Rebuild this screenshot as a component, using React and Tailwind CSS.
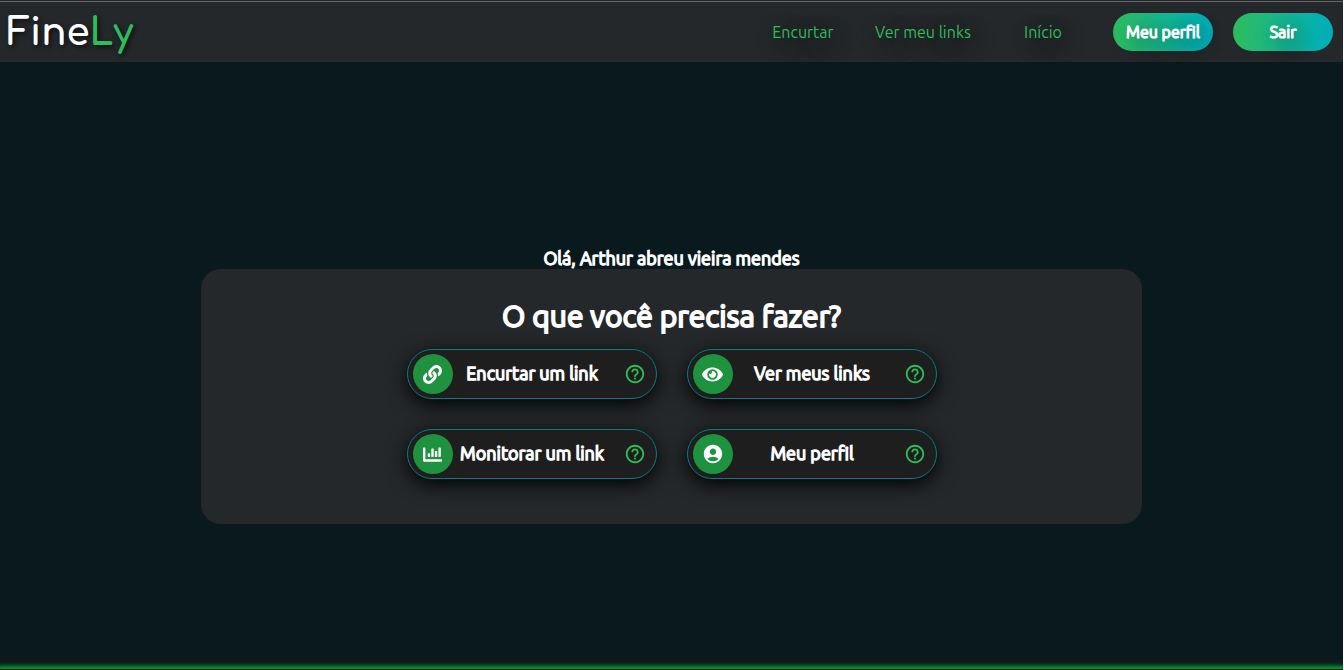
import { FaLink, FaEye, FaChartBar } from "react-icons/fa";
import { MdAccountCircle, MdHelpOutline } from "react-icons/md";

const links = ["Encurtar", "Ver meu links", "Início"];

const actions = [
  { label: "Encurtar um link", Icon: FaLink, iconSize: "size-[19px]" },
  { label: "Ver meus links", Icon: FaEye, iconSize: "size-[21px]" },
  { label: "Monitorar um link", Icon: FaChartBar, iconSize: "size-[19px]" },
  { label: "Meu perfil", Icon: MdAccountCircle, iconSize: "size-[22px]" },
];

function Header() {
  return (
    <header className="border-t border-[#242628] bg-[#25282b]">
      <div className="flex h-[61px] items-center justify-between border-t border-[#65666b] pr-2.5 pl-[7px]">
        <a
          href="#inicio"
          className="pt-[3px] font-['Comfortaa','Varela_Round',sans-serif] text-[37px] leading-none font-bold text-white [text-shadow:2px_2px_5px_#000000aa]"
        >
          Fine<span className="text-[#2dbd5a]">Ly</span>
        </a>
        <nav className="flex items-center gap-5">
          {links.map((label) => (
            <a
              key={label}
              href="#"
              className="w-[100px] text-center text-base whitespace-nowrap text-[#2dbd5a] [text-shadow:5px_5px_20px_#000000]"
            >
              {label}
            </a>
          ))}
          {["Meu perfil", "Sair"].map((label) => (
            <button
              key={label}
              type="button"
              className="h-[38px] w-[100px] rounded-full bg-linear-to-r from-[#2dbd5a] to-[#00adbb] text-base whitespace-nowrap text-white [-webkit-text-stroke:0.07em_white] [text-shadow:5px_5px_20px_#000000]"
            >
              {label}
            </button>
          ))}
        </nav>
      </div>
    </header>
  );
}

function ActionButton({ label, Icon, iconSize }) {
  return (
    <div className="flex h-[50px] w-[250px] items-center rounded-full border border-[#0b7a82] bg-[#1e1e1e] pr-2.5 pl-[5px] shadow-[0_5px_20px_#000000]">
      <button type="button" className="flex flex-1 items-center text-white">
        <span className="flex size-10 items-center justify-center rounded-full bg-[#1e923f]">
          <Icon className={iconSize} />
        </span>
        <span className="flex-1 pr-0.5 pb-0.5 text-center text-lg whitespace-nowrap [-webkit-text-stroke:0.07em_white]">
          {label}
        </span>
      </button>
      <button type="button" aria-label={`Ajuda: ${label}`} className="ml-2.5 text-[#2dbd5a]">
        <MdHelpOutline className="size-[22px]" />
      </button>
    </div>
  );
}

export default function App() {
  return (
    <div className="flex min-h-screen flex-col overflow-hidden border-r border-white bg-[#0a191d] font-['Ubuntu','Noto_Sans',sans-serif]">
      <Header />
      <main className="flex flex-1 flex-col items-center justify-center pt-[42px] text-white">
        <p className="pb-0.5 text-lg leading-[18px] [-webkit-text-stroke:0.07em_white]">
          Olá, Arthur abreu vieira mendes
        </p>
        <section className="flex w-[70%] flex-col items-center rounded-[20px] bg-[#25282b] pt-7 pb-[45px]">
          <h1 className="text-[30px] leading-[38px] [-webkit-text-stroke:0.06em_white]">
            O que você precisa fazer?
          </h1>
          <div className="mt-3.5 grid grid-cols-2 gap-[30px]">
            {actions.map((action) => (
              <ActionButton key={action.label} {...action} />
            ))}
          </div>
        </section>
      </main>
      <footer className="h-px bg-[#071409] shadow-[0_0_4px_3px_#00a82d]" />
    </div>
  );
}
